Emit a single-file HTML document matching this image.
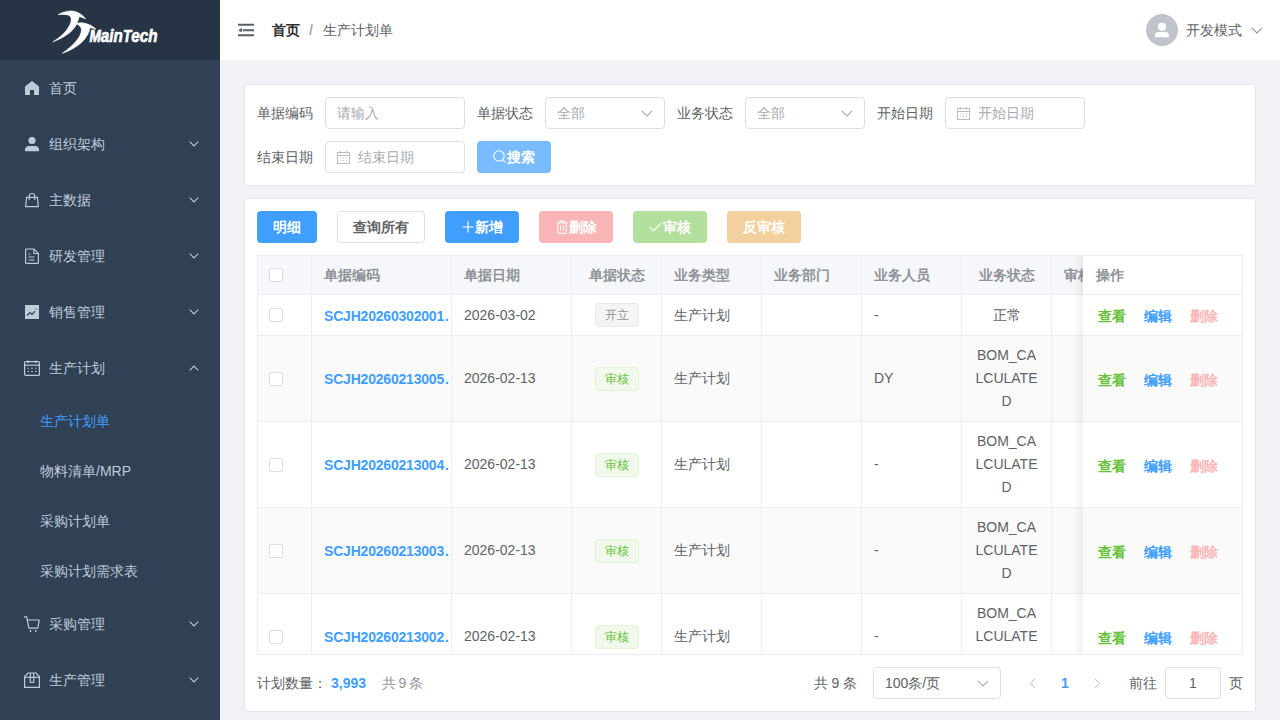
<!DOCTYPE html>
<html><head><meta charset="utf-8">
<style>
*{box-sizing:border-box;margin:0;padding:0}
html,body{width:1280px;height:720px;overflow:hidden}
body{font-family:"Liberation Sans",sans-serif;font-size:14px;color:#606266;background:#f0f2f5;position:relative}
.abs{position:absolute}
#side{position:absolute;left:0;top:0;width:220px;height:720px;background:#304156;overflow:hidden}
#logo{position:absolute;left:0;top:0;width:220px;height:60px;background:#263445}
.mi{position:absolute;left:0;width:220px;height:56px;line-height:56px;color:#bfcbd9;font-size:14px}
.mi .t{position:absolute;left:49px;top:0}
.mi svg.ic{position:absolute;left:24px}
.mi .arr{position:absolute;left:189px;top:25px}
.si{position:absolute;left:0;width:220px;height:50px;line-height:50px;color:#bfcbd9;font-size:14px;padding-left:40px}
#hdr{position:absolute;left:220px;top:0;width:1060px;height:60px;background:#fff}
.card{position:absolute;background:#fff;border:1px solid #e4e7ed;border-radius:4px}
.lbl{position:absolute;top:97px;height:32px;line-height:32px;color:#606266;font-size:14px}
.inp{position:absolute;height:32px;border:1px solid #dcdfe6;border-radius:4px;background:#fff;line-height:30px;color:#a8abb2;font-size:14px}
.btn{position:absolute;top:211px;height:32px;line-height:32px;border-radius:4px;color:#fff;font-weight:bold;font-size:14px;text-align:center}
.tbl{position:absolute;border:1px solid #ebeef5;overflow:hidden;background:#fff}
.hl{left:0;width:100%;height:1px;background:#ebeef5}
.vl{top:0;width:1px;height:100%;background:#ebeef5}
.cell{position:absolute;display:flex;align-items:center;padding:0 12px;color:#606266;line-height:23px;font-size:14px}
.cell.c{justify-content:center;text-align:center}
.cb{margin-left:-1px;display:inline-block;width:14px;height:14px;border:1px solid #dcdfe6;border-radius:2px;background:#fff}
.lnk{color:#409eff;font-weight:bold;white-space:nowrap;flex-shrink:0;letter-spacing:-0.2px;position:relative;top:1px}
.cell{overflow:hidden}
.tag{display:inline-block;height:24px;line-height:22px;padding:0 9px;font-size:12px;border-radius:4px;border:1px solid}
.tag.info{background:#f4f4f5;border-color:#e9e9eb;color:#909399}
.tag.ok{background:#f0f9eb;border-color:#e1f3d8;color:#67c23a}
.wrap{word-break:break-all;display:block}
.ops span{position:absolute;top:50%;margin-top:-10px;line-height:22px;font-weight:bold}
</style></head><body>
<div id="side">
  <div id="logo">
    <svg class="abs" style="left:0;top:0" width="220" height="60" viewBox="0 0 220 60">
      <path stroke="#fff" stroke-width="0.5" d="M58 14.7 C63 11.5 69 10.5 73 11 C78 11.8 83 15 85.7 19 L79.5 16.5 L77.5 22 C75 30 66 37 52.7 42 C62 36 68 30 70.5 23 C72 19 71 16 68 15 C65 14.3 61 14.3 58 14.7 Z" fill="#fff"/>
      <path stroke="#fff" stroke-width="0.6" d="M76 23.5 C82 21.5 91 24 96 29.3 L90 27.5 C89 37 79 48 62.3 53.3 C74 45 81 37 81.5 30 C81.5 27 79 25 76 23.5 Z" fill="#fff"/>
      <text x="89.5" y="42" font-family="Liberation Sans" font-weight="bold" font-style="italic" font-size="17" fill="#fff" stroke="#fff" stroke-width="0.7" textLength="68" lengthAdjust="spacingAndGlyphs">M<tspan font-size="19">ain</tspan>T<tspan font-size="19">ech</tspan></text>
    </svg>
  </div>
  <div class="mi" style="top:60px">
    <svg class="ic" style="top:20px" width="16" height="16" viewBox="0 0 16 16"><path d="M8 1 L15 6.6 V15 H10 V10 H6 V15 H1 V6.6 Z" fill="#bfcbd9"/></svg>
    <span class="t">首页</span>
  </div>
  <div class="mi" style="top:116px">
    <svg class="ic" style="top:20px" width="16" height="16" viewBox="0 0 16 16"><circle cx="8" cy="4.5" r="3.6" fill="#bfcbd9"/><path d="M1 13.5 C1 11 3 10 5 10 H11 C13 10 15 11 15 13.5 V15.2 H1 Z" fill="#bfcbd9"/></svg>
    <span class="t">组织架构</span>
    <svg class="arr" width="10" height="6" viewBox="0 0 10 6"><path d="M0.7 0.7 L5 5 L9.3 0.7" stroke="#bfcbd9" stroke-width="1.1" fill="none"/></svg>
  </div>
  <div class="mi" style="top:172px">
    <svg class="ic" style="top:20px" width="16" height="16" viewBox="0 0 16 16"><path d="M2.5 5.3 H13.5 L14.3 14.6 H1.7 Z" stroke="#bfcbd9" stroke-width="1.2" fill="none"/><path d="M5.2 8 V4.3 C5.2 2.6 6.4 1.5 8 1.5 C9.6 1.5 10.8 2.6 10.8 4.3 V8" stroke="#bfcbd9" stroke-width="1.2" fill="none"/></svg>
    <span class="t">主数据</span>
    <svg class="arr" width="10" height="6" viewBox="0 0 10 6"><path d="M0.7 0.7 L5 5 L9.3 0.7" stroke="#bfcbd9" stroke-width="1.1" fill="none"/></svg>
  </div>
  <div class="mi" style="top:228px">
    <svg class="ic" style="top:20px" width="16" height="16" viewBox="0 0 16 16"><path d="M2.6 1 H10 L14.4 5.4 V14.4 Q14.4 15.4 13.4 15.4 H2.6 Q1.6 15.4 1.6 14.4 V2 Q1.6 1 2.6 1 Z" stroke="#bfcbd9" stroke-width="1.2" fill="none"/><path d="M9.9 1.2 V5.5 H14.2" stroke="#bfcbd9" stroke-width="1.2" fill="none"/><path d="M4.5 6 H6.5 M4.5 9 H10.5 M4.5 12 H10.5" stroke="#bfcbd9" stroke-width="1.1"/></svg>
    <span class="t">研发管理</span>
    <svg class="arr" width="10" height="6" viewBox="0 0 10 6"><path d="M0.7 0.7 L5 5 L9.3 0.7" stroke="#bfcbd9" stroke-width="1.1" fill="none"/></svg>
  </div>
  <div class="mi" style="top:284px">
    <svg class="ic" style="top:20px" width="16" height="16" viewBox="0 0 16 16"><rect x="1" y="1" width="14" height="14" fill="#bfcbd9"/><path d="M3 11.5 L6 8.5 L8 10.5 L11 7.2" stroke="#304156" stroke-width="1.2" fill="none"/><path d="M11.5 5 L12.8 4.2 L12.6 5.9 Z" fill="#304156"/></svg>
    <span class="t">销售管理</span>
    <svg class="arr" width="10" height="6" viewBox="0 0 10 6"><path d="M0.7 0.7 L5 5 L9.3 0.7" stroke="#bfcbd9" stroke-width="1.1" fill="none"/></svg>
  </div>
  <div class="mi" style="top:340px">
    <svg class="ic" style="top:20px" width="16" height="16" viewBox="0 0 16 16"><rect x="0.6" y="1.6" width="14.8" height="13.8" rx="1" stroke="#bfcbd9" stroke-width="1.2" fill="none"/><path d="M0.6 5.2 H15.4" stroke="#bfcbd9" stroke-width="1.2"/><path d="M4 0.5 V3 M12 0.5 V3" stroke="#bfcbd9" stroke-width="1.4"/><path d="M3.5 8.3 H5 M7.2 8.3 H8.8 M11 8.3 H12.5 M3.5 11.5 H5 M7.2 11.5 H8.8 M11 11.5 H12.5" stroke="#bfcbd9" stroke-width="1.1"/></svg>
    <span class="t">生产计划</span>
    <svg class="arr" style="top:25px" width="10" height="6" viewBox="0 0 10 6"><path d="M0.7 5.3 L5 1 L9.3 5.3" stroke="#bfcbd9" stroke-width="1.1" fill="none"/></svg>
  </div>
  <div class="si" style="top:396px;color:#409eff">生产计划单</div>
  <div class="si" style="top:446px">物料清单/MRP</div>
  <div class="si" style="top:496px">采购计划单</div>
  <div class="si" style="top:546px">采购计划需求表</div>
  <div class="mi" style="top:596px">
    <svg class="ic" style="top:20px" width="16" height="16" viewBox="0 0 16 16"><path d="M0 0.8 H2.7 L4.9 12.2 H13.8 L15.3 4 H3.5" stroke="#bfcbd9" stroke-width="1.2" fill="none" stroke-linejoin="round"/><circle cx="6.5" cy="15" r="0.9" fill="#bfcbd9"/><circle cx="11.8" cy="15" r="0.9" fill="#bfcbd9"/></svg>
    <span class="t">采购管理</span>
    <svg class="arr" width="10" height="6" viewBox="0 0 10 6"><path d="M0.7 0.7 L5 5 L9.3 0.7" stroke="#bfcbd9" stroke-width="1.1" fill="none"/></svg>
  </div>
  <div class="mi" style="top:652px">
    <svg class="ic" style="top:20px" width="16" height="16" viewBox="0 0 16 16"><path d="M0.6 4.5 L4 1 H12 L15.4 4.5 V15.4 H0.6 Z" stroke="#bfcbd9" stroke-width="1.2" fill="none"/><path d="M0.6 5.3 H15.4" stroke="#bfcbd9" stroke-width="1.2"/><path d="M6.3 1 V10.4 H9.7 V1" stroke="#bfcbd9" stroke-width="1.2" fill="none"/></svg>
    <span class="t">生产管理</span>
    <svg class="arr" width="10" height="6" viewBox="0 0 10 6"><path d="M0.7 0.7 L5 5 L9.3 0.7" stroke="#bfcbd9" stroke-width="1.1" fill="none"/></svg>
  </div>
</div>
<div id="hdr">
  <svg class="abs" style="left:18px;top:23px" width="16" height="14" viewBox="0 0 16 14"><path d="M0.3 1.8 H15.7 M5.5 7.2 H15.7 M0.3 12.3 H15.7" stroke="#5a5e66" stroke-width="2" stroke-linecap="round"/><path d="M0.3 7.2 L3.8 4.8 V9.6 Z" fill="#5a5e66"/></svg>
  <span class="abs" style="left:52px;top:20px;line-height:20px;font-weight:bold;color:#303133">首页</span>
  <span class="abs" style="left:89px;top:20px;line-height:20px;color:#a8abb2;font-weight:bold">/</span>
  <span class="abs" style="left:103px;top:20px;line-height:20px;color:#606266">生产计划单</span>
  <svg class="abs" style="left:926px;top:14px" width="32" height="32" viewBox="0 0 32 32"><circle cx="16" cy="16" r="16" fill="#c0c4cc"/><circle cx="16" cy="12.8" r="4.1" fill="#fff"/><path d="M9 21.4 C9 19.2 10.3 17.9 12.3 17.9 H19.7 C21.7 17.9 23 19.2 23 21.4 V23.2 H9 Z" fill="#fff"/></svg>
  <span class="abs" style="left:966px;top:20px;line-height:20px;color:#606266">开发模式</span>
  <svg class="abs" style="left:1031px;top:27px" width="12" height="7" viewBox="0 0 12 7"><path d="M0.8 0.8 L6 6 L11.2 0.8" stroke="#909399" stroke-width="1.1" fill="none"/></svg>
</div>
<div class="card" style="left:244px;top:84px;width:1012px;height:102px"></div>
<span class="lbl" style="left:257px">单据编码</span>
<div class="inp" style="left:325px;top:97px;width:140px;padding-left:11px">请输入</div>
<span class="lbl" style="left:477px">单据状态</span>
<div class="inp" style="left:545px;top:97px;width:120px;padding-left:11px">全部<svg class="abs" style="left:95px;top:12px" width="12" height="7" viewBox="0 0 12 7"><path d="M0.8 0.8 L6 6 L11.2 0.8" stroke="#a8abb2" stroke-width="1.1" fill="none"/></svg></div>
<span class="lbl" style="left:677px">业务状态</span>
<div class="inp" style="left:745px;top:97px;width:120px;padding-left:11px">全部<svg class="abs" style="left:95px;top:12px" width="12" height="7" viewBox="0 0 12 7"><path d="M0.8 0.8 L6 6 L11.2 0.8" stroke="#a8abb2" stroke-width="1.1" fill="none"/></svg></div>
<span class="lbl" style="left:877px">开始日期</span>
<div class="inp" style="left:945px;top:97px;width:140px;padding-left:32px">开始日期<svg class="abs cal" style="left:11px;top:9px" width="13" height="13" viewBox="0 0 13 13"><rect x="0.5" y="1.5" width="12" height="11" stroke="#b8bcc4" stroke-width="1" fill="none"/><path d="M0.5 4.5 H12.5 M3.5 0 V2.5 M9.5 0 V2.5" stroke="#b8bcc4" stroke-width="1"/><path d="M3 7 H4.2 M6 7 H7.2 M9 7 H10.2 M3 9.5 H4.2 M6 9.5 H7.2 M9 9.5 H10.2" stroke="#b8bcc4" stroke-width="0.9"/></svg></div>
<span class="lbl" style="left:257px;top:141px">结束日期</span>
<div class="inp" style="left:325px;top:141px;width:140px;padding-left:32px">结束日期<svg class="abs cal" style="left:11px;top:9px" width="13" height="13" viewBox="0 0 13 13"><rect x="0.5" y="1.5" width="12" height="11" stroke="#b8bcc4" stroke-width="1" fill="none"/><path d="M0.5 4.5 H12.5 M3.5 0 V2.5 M9.5 0 V2.5" stroke="#b8bcc4" stroke-width="1"/><path d="M3 7 H4.2 M6 7 H7.2 M9 7 H10.2 M3 9.5 H4.2 M6 9.5 H7.2 M9 9.5 H10.2" stroke="#b8bcc4" stroke-width="0.9"/></svg></div>
<div class="btn" style="left:477px;top:141px;width:74px;background:#79bbff"><svg class="abs" style="left:16px;top:9px" width="13" height="14" viewBox="0 0 13 14"><circle cx="6" cy="6" r="5.2" stroke="#fff" stroke-width="1.1" fill="none"/><path d="M9.7 9.7 L12.3 12.3" stroke="#fff" stroke-width="1.1"/></svg><span class="abs" style="left:30px;top:0">搜索</span></div>
<div class="card" style="left:244px;top:198px;width:1012px;height:514px"></div>
<div class="btn" style="left:257px;width:60px;background:#409eff">明细</div>
<div class="btn" style="left:337px;width:88px;background:#fff;border:1px solid #dcdfe6;color:#606266;line-height:30px">查询所有</div>
<div class="btn" style="left:445px;width:74px;background:#409eff"><svg width="12" height="12" viewBox="0 0 12 12" style="vertical-align:-1px;margin-right:1px"><path d="M6 0.5 V11.5 M0.5 6 H11.5" stroke="#fff" stroke-width="1.2"/></svg>新增</div>
<div class="btn" style="left:539px;width:74px;background:#fab6b6"><svg width="12" height="14" viewBox="0 0 12 14" style="vertical-align:-2px;margin-right:1px"><path d="M0.5 2.8 H11.5 M4 2.8 V0.8 H8 V2.8 M1.8 2.8 V13.3 H10.2 V2.8 M4.6 5.5 V10.8 M7.4 5.5 V10.8" stroke="#fff" stroke-width="1" fill="none"/></svg>删除</div>
<div class="btn" style="left:633px;width:74px;background:#b3e19d"><svg width="13" height="10" viewBox="0 0 13 10" style="vertical-align:0px;margin-right:1px"><path d="M0.7 5 L4.5 8.8 L12.3 1" stroke="#fff" stroke-width="1.1" fill="none"/></svg>审核</div>
<div class="btn" style="left:727px;width:74px;background:#f3d19e">反审核</div>
<div class="tbl" style="left:257px;top:255px;width:986px;height:400px">
<div class="abs" style="left:0;top:0;width:986px;height:39px;background:#f5f7fa"></div>
<div class="abs" style="left:0;top:80px;width:986px;height:85px;background:#fafafa"></div>
<div class="abs" style="left:0;top:252px;width:986px;height:85px;background:#fafafa"></div>
<div class="abs hl" style="top:38px"></div>
<div class="abs hl" style="top:79px"></div>
<div class="abs hl" style="top:165px"></div>
<div class="abs hl" style="top:251px"></div>
<div class="abs hl" style="top:337px"></div>
<div class="abs hl" style="top:423px"></div>
<div class="abs vl" style="left:53px"></div>
<div class="abs vl" style="left:193px"></div>
<div class="abs vl" style="left:313px"></div>
<div class="abs vl" style="left:403px"></div>
<div class="abs vl" style="left:503px"></div>
<div class="abs vl" style="left:603px"></div>
<div class="abs vl" style="left:703px"></div>
<div class="abs vl" style="left:793px"></div>
<div class="abs vl" style="left:893px"></div>
<div class="cell l" style="left:0px;top:0px;width:53px;height:38px;font-weight:bold;color:#909399"><span class="cb"></span></div>
<div class="cell l" style="left:54px;top:0px;width:139px;height:38px;font-weight:bold;color:#909399">单据编码</div>
<div class="cell l" style="left:194px;top:0px;width:119px;height:38px;font-weight:bold;color:#909399">单据日期</div>
<div class="cell c" style="left:314px;top:0px;width:89px;height:38px;font-weight:bold;color:#909399">单据状态</div>
<div class="cell l" style="left:404px;top:0px;width:99px;height:38px;font-weight:bold;color:#909399">业务类型</div>
<div class="cell l" style="left:504px;top:0px;width:99px;height:38px;font-weight:bold;color:#909399">业务部门</div>
<div class="cell l" style="left:604px;top:0px;width:99px;height:38px;font-weight:bold;color:#909399">业务人员</div>
<div class="cell c" style="left:704px;top:0px;width:89px;height:38px;font-weight:bold;color:#909399">业务状态</div>
<div class="cell l" style="left:794px;top:0px;width:99px;height:38px;font-weight:bold;color:#909399">审核状态</div>
<div class="cell l" style="left:0px;top:39px;width:53px;height:40px;"><span class="cb"></span></div>
<div class="cell l" style="left:54px;top:39px;width:139px;height:40px;"><span class="lnk">SCJH20260302001<span style="margin-left:1px">.</span></span></div>
<div class="cell l" style="left:194px;top:39px;width:119px;height:40px;">2026-03-02</div>
<div class="cell c" style="left:314px;top:39px;width:89px;height:40px;"><span class="tag info">开立</span></div>
<div class="cell l" style="left:404px;top:39px;width:99px;height:40px;">生产计划</div>
<div class="cell l" style="left:504px;top:39px;width:99px;height:40px;"></div>
<div class="cell l" style="left:604px;top:39px;width:99px;height:40px;">-</div>
<div class="cell c" style="left:704px;top:39px;width:89px;height:40px;"><span class="wrap">正常</span></div>
<div class="cell l" style="left:794px;top:39px;width:99px;height:40px;"></div>
<div class="cell l" style="left:0px;top:80px;width:53px;height:85px;"><span class="cb"></span></div>
<div class="cell l" style="left:54px;top:80px;width:139px;height:85px;"><span class="lnk">SCJH20260213005<span style="margin-left:1px">.</span></span></div>
<div class="cell l" style="left:194px;top:80px;width:119px;height:85px;">2026-02-13</div>
<div class="cell c" style="left:314px;top:80px;width:89px;height:85px;"><span class="tag ok">审核</span></div>
<div class="cell l" style="left:404px;top:80px;width:99px;height:85px;">生产计划</div>
<div class="cell l" style="left:504px;top:80px;width:99px;height:85px;"></div>
<div class="cell l" style="left:604px;top:80px;width:99px;height:85px;">DY</div>
<div class="cell c" style="left:704px;top:80px;width:89px;height:85px;"><span class="wrap">BOM_CALCULATED</span></div>
<div class="cell l" style="left:794px;top:80px;width:99px;height:85px;"></div>
<div class="cell l" style="left:0px;top:166px;width:53px;height:85px;"><span class="cb"></span></div>
<div class="cell l" style="left:54px;top:166px;width:139px;height:85px;"><span class="lnk">SCJH20260213004<span style="margin-left:1px">.</span></span></div>
<div class="cell l" style="left:194px;top:166px;width:119px;height:85px;">2026-02-13</div>
<div class="cell c" style="left:314px;top:166px;width:89px;height:85px;"><span class="tag ok">审核</span></div>
<div class="cell l" style="left:404px;top:166px;width:99px;height:85px;">生产计划</div>
<div class="cell l" style="left:504px;top:166px;width:99px;height:85px;"></div>
<div class="cell l" style="left:604px;top:166px;width:99px;height:85px;">-</div>
<div class="cell c" style="left:704px;top:166px;width:89px;height:85px;"><span class="wrap">BOM_CALCULATED</span></div>
<div class="cell l" style="left:794px;top:166px;width:99px;height:85px;"></div>
<div class="cell l" style="left:0px;top:252px;width:53px;height:85px;"><span class="cb"></span></div>
<div class="cell l" style="left:54px;top:252px;width:139px;height:85px;"><span class="lnk">SCJH20260213003<span style="margin-left:1px">.</span></span></div>
<div class="cell l" style="left:194px;top:252px;width:119px;height:85px;">2026-02-13</div>
<div class="cell c" style="left:314px;top:252px;width:89px;height:85px;"><span class="tag ok">审核</span></div>
<div class="cell l" style="left:404px;top:252px;width:99px;height:85px;">生产计划</div>
<div class="cell l" style="left:504px;top:252px;width:99px;height:85px;"></div>
<div class="cell l" style="left:604px;top:252px;width:99px;height:85px;">-</div>
<div class="cell c" style="left:704px;top:252px;width:89px;height:85px;"><span class="wrap">BOM_CALCULATED</span></div>
<div class="cell l" style="left:794px;top:252px;width:99px;height:85px;"></div>
<div class="cell l" style="left:0px;top:338px;width:53px;height:85px;"><span class="cb"></span></div>
<div class="cell l" style="left:54px;top:338px;width:139px;height:85px;"><span class="lnk">SCJH20260213002<span style="margin-left:1px">.</span></span></div>
<div class="cell l" style="left:194px;top:338px;width:119px;height:85px;">2026-02-13</div>
<div class="cell c" style="left:314px;top:338px;width:89px;height:85px;"><span class="tag ok">审核</span></div>
<div class="cell l" style="left:404px;top:338px;width:99px;height:85px;">生产计划</div>
<div class="cell l" style="left:504px;top:338px;width:99px;height:85px;"></div>
<div class="cell l" style="left:604px;top:338px;width:99px;height:85px;">-</div>
<div class="cell c" style="left:704px;top:338px;width:89px;height:85px;"><span class="wrap">BOM_CALCULATED</span></div>
<div class="cell l" style="left:794px;top:338px;width:99px;height:85px;"></div>
<div class="abs" style="left:815px;top:0;width:10px;height:400px;background:linear-gradient(to right,rgba(0,0,0,0),rgba(0,0,0,0.06))"></div>
<div class="abs" style="left:825px;top:0;width:161px;height:400px;background:#fff">
<div class="abs" style="left:0;top:80px;width:200px;height:85px;background:#fafafa"></div>
<div class="abs" style="left:0;top:252px;width:200px;height:85px;background:#fafafa"></div>
<div class="abs hl" style="top:38px"></div>
<div class="abs hl" style="top:79px"></div>
<div class="abs hl" style="top:165px"></div>
<div class="abs hl" style="top:251px"></div>
<div class="abs hl" style="top:337px"></div>
<div class="abs hl" style="top:423px"></div>
<div class="cell l" style="left:0;top:0;width:160px;height:38px;font-weight:bold;color:#909399;padding-left:13px">操作</div>
<div class="cell l ops" style="left:0;top:39px;width:160px;height:40px"><span style="color:#67c23a;left:15px">查看</span><span style="color:#409eff;left:61px">编辑</span><span style="color:#fab6b6;left:107px">删除</span></div>
<div class="cell l ops" style="left:0;top:80px;width:160px;height:85px"><span style="color:#67c23a;left:15px">查看</span><span style="color:#409eff;left:61px">编辑</span><span style="color:#fab6b6;left:107px">删除</span></div>
<div class="cell l ops" style="left:0;top:166px;width:160px;height:85px"><span style="color:#67c23a;left:15px">查看</span><span style="color:#409eff;left:61px">编辑</span><span style="color:#fab6b6;left:107px">删除</span></div>
<div class="cell l ops" style="left:0;top:252px;width:160px;height:85px"><span style="color:#67c23a;left:15px">查看</span><span style="color:#409eff;left:61px">编辑</span><span style="color:#fab6b6;left:107px">删除</span></div>
<div class="cell l ops" style="left:0;top:338px;width:160px;height:85px"><span style="color:#67c23a;left:15px">查看</span><span style="color:#409eff;left:61px">编辑</span><span style="color:#fab6b6;left:107px">删除</span></div>
</div>
</div>
<span class="abs" style="left:257px;top:673px;line-height:20px;color:#606266">计划数量：</span>
<span class="abs" style="left:331px;top:673px;line-height:20px;color:#409eff;font-weight:bold">3,993</span>
<span class="abs" style="left:382px;top:673px;line-height:20px;color:#909399;word-spacing:-1.5px">共 9 条</span>
<span class="abs" style="left:814px;top:673px;line-height:20px;color:#606266;word-spacing:-0.5px">共 9 条</span>
<div class="inp" style="left:873px;top:667px;width:128px;padding-left:11px;color:#606266">100条/页<svg class="abs" style="left:103px;top:12px" width="12" height="7" viewBox="0 0 12 7"><path d="M0.8 0.8 L6 6 L11.2 0.8" stroke="#a8abb2" stroke-width="1.1" fill="none"/></svg></div>
<svg class="abs" style="left:1029px;top:678px" width="7" height="11" viewBox="0 0 7 11"><path d="M5.8 1 L1.4 5.5 L5.8 10" stroke="#b4b8bf" stroke-width="1" fill="none"/></svg>
<span class="abs" style="left:1061px;top:673px;line-height:20px;color:#409eff;font-weight:bold">1</span>
<svg class="abs" style="left:1094px;top:678px" width="7" height="11" viewBox="0 0 7 11"><path d="M1.2 1 L5.6 5.5 L1.2 10" stroke="#b4b8bf" stroke-width="1" fill="none"/></svg>
<span class="abs" style="left:1129px;top:673px;line-height:20px;color:#606266">前往</span>
<div class="inp" style="left:1165px;top:667px;width:56px;text-align:center;color:#606266">1</div>
<span class="abs" style="left:1229px;top:673px;line-height:20px;color:#606266">页</span>
</body></html>
